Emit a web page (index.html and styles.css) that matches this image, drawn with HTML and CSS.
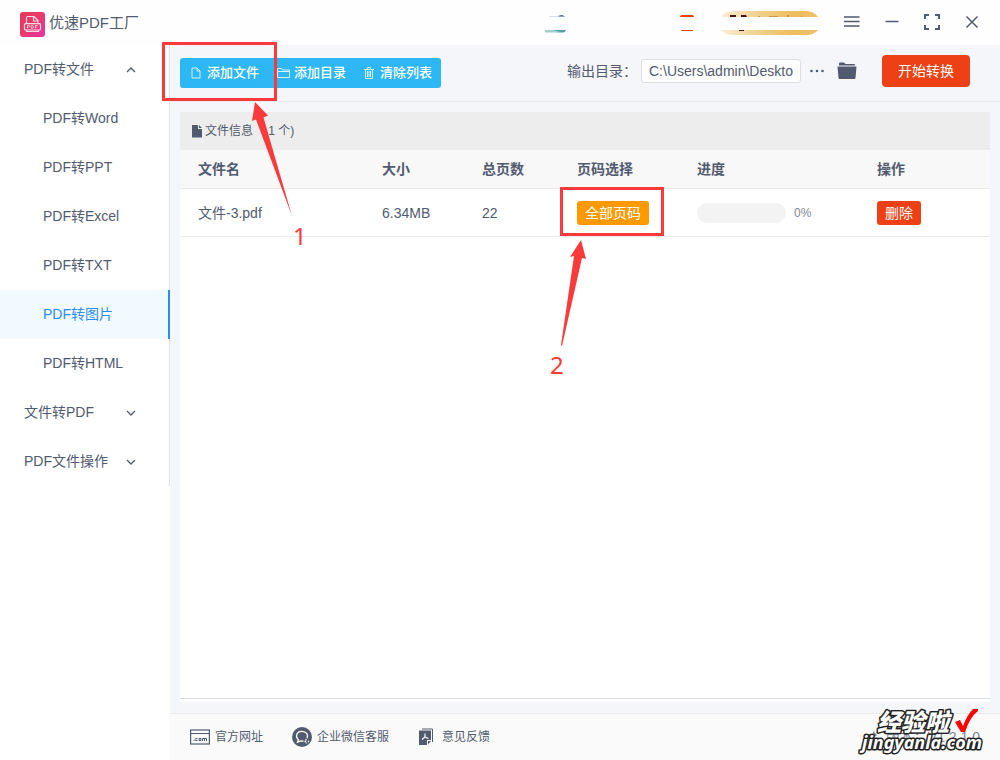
FILE: index.html
```html
<!DOCTYPE html>
<html lang="zh-CN">
<head>
<meta charset="utf-8">
<meta name="viewport" content="width=device-width, initial-scale=1">
<title>优速PDF工厂</title>
<link rel="stylesheet" href="styles.css">
</head>
<body>
<div class="app">
  <header class="titlebar">
    <svg class="logo" width="25" height="25" viewBox="0 0 25 25" aria-hidden="true">
      <defs><linearGradient id="lg" x1="0" y1="0" x2="1" y2="1"><stop offset="0" stop-color="#e8365c"/><stop offset=".5" stop-color="#e93a6b"/><stop offset="1" stop-color="#ec32a8"/></linearGradient></defs>
      <rect width="25" height="25" rx="3" fill="url(#lg)"/>
      <g fill="none" stroke="#fbdde6" stroke-width="1.2">
        <path d="M6.500 12V5.500q0-1 1-1h6.500l4 4V12M13.500 4.500V9H18"/>
        <rect x="4.500" y="11.600" width="16" height="6.400" rx="1"/>
        <path d="M6.500 18v1.500h12V18"/>
        <path d="M7.500 16.500v-3h1.200q1 0 1 .8t-1 .8H7.500M11.300 13.500v3h.8q1.300 0 1.300-1.500t-1.300-1.500zM15.300 16.500v-3h2.200M15.300 15h1.800" stroke-width=".8"/>
      </g>
    </svg>
    <h1 class="brand">优速PDF工厂</h1>
    <div class="badges" aria-hidden="true">
      <svg width="24" height="24" viewBox="0 0 24 24"><path d="M5 5h9l4-1 3 1.500H5z" fill="#b5bfc8"/><path d="M14 5l4-1 3 1.500h-6z" fill="#4f5f78"/><path d="M1 19h21q-1 2.500-3 2.500H14z" fill="#579da4"/><path d="M1 19h8l9 2.500H1z" fill="#a8d0d4"/></svg>
      <svg class="badge-red" width="16" height="24" viewBox="0 0 16 24"><path d="M1 6q0-2 2-2h10q2 0 2 2zM2 19h12v.5q0 .5-1 .5H3q-1 0-1-1z" fill="#ed4014"/></svg>
      <svg width="97" height="24" viewBox="0 0 97 24"><defs><linearGradient id="gold"><stop offset="0" stop-color="#fcedd6"/><stop offset=".45" stop-color="#f0cc83"/><stop offset=".75" stop-color="#edbd5c"/><stop offset="1" stop-color="#eec06d"/></linearGradient></defs><path d="M0 6Q4 0 12 0h73q8 0 12 6zM0 19h97q-4 5-12 5H12q-8 0-12-5z" fill="url(#gold)"/><path d="M9 4h6v2H9zM20 4h5l1 2h-6zM18 19h5v1h-5z" fill="#4b1414"/><path d="M37 5h2v1h-2zM48 5h9v1h-9zM66 4h2v2h-2zM80 5h1v1h-1z" fill="#c49a50"/></svg>
    </div>
    <div class="window-buttons">
      <button type="button" aria-label="菜单"><svg width="16" height="16" viewBox="0 0 16 16"><path d="M0 3h15.500M0 7.500h15.500M0 12h15.500" stroke="currentColor" stroke-width="1.500"/></svg></button>
      <button type="button" aria-label="最小化"><svg width="16" height="16" viewBox="0 0 16 16"><path d="M1.500 7.500h13" stroke="currentColor" stroke-width="1.500"/></svg></button>
      <button type="button" aria-label="最大化"><svg width="16" height="16" viewBox="0 0 16 16"><path d="M1 5V1h4M11 1h4v4M15 11v4h-4M5 15H1v-4" fill="none" stroke="currentColor" stroke-width="2"/></svg></button>
      <button type="button" aria-label="关闭"><svg width="16" height="16" viewBox="0 0 16 16"><path d="M2.500 2.500l11 11M13.500 2.500l-11 11" stroke="currentColor" stroke-width="1.500"/></svg></button>
    </div>
  </header>

  <div class="body">
    <aside class="sidebar">
      <nav class="menu">
        <button type="button" class="group">PDF转文件<svg width="10" height="10" viewBox="0 0 10 10"><path d="M1 7l4-4 4 4"/></svg></button>
        <a class="item" href="#word">PDF转Word</a>
        <a class="item" href="#ppt">PDF转PPT</a>
        <a class="item" href="#excel">PDF转Excel</a>
        <a class="item" href="#txt">PDF转TXT</a>
        <a class="item active" href="#image">PDF转图片</a>
        <a class="item" href="#html">PDF转HTML</a>
        <button type="button" class="group">文件转PDF<svg width="10" height="10" viewBox="0 0 10 10"><path d="M1 3l4 4 4-4"/></svg></button>
        <button type="button" class="group">PDF文件操作<svg width="10" height="10" viewBox="0 0 10 10"><path d="M1 3l4 4 4-4"/></svg></button>
      </nav>
    </aside>

    <main class="main">
      <div class="toolbar">
        <div class="actions">
          <button type="button"><svg width="10" height="12" viewBox="0 0 10 12"><path d="M1 1h5l3 3v7H1zM6 1v3h3"/></svg>添加文件</button>
          <button type="button"><svg width="13" height="12" viewBox="0 0 13 12"><path d="M.5 10.500v-9h4l1 1.500h7v7.500zM.5 4.500h12"/></svg>添加目录</button>
          <button type="button" class="clear"><svg width="10" height="12" viewBox="0 0 10 12"><path d="M0 2.500h10M3.500 2V.5h3V2M1.500 3v8.500h7V3M3.500 4v6M5 4v6M6.500 4v6"/></svg>清除列表</button>
        </div>
        <div class="output">
          <label for="dir">输出目录：</label>
          <input id="dir" type="text" value="C:\Users\admin\Deskto">
          <button type="button" class="plain" aria-label="更多"><svg width="16" height="16" viewBox="0 0 16 16" fill="currentColor"><circle cx="2.500" cy="8" r="1.300"/><circle cx="8" cy="8" r="1.300"/><circle cx="13.500" cy="8" r="1.300"/></svg></button>
          <button type="button" class="plain folder" aria-label="打开目录"><svg width="20" height="18" viewBox="0 0 20 18" fill="currentColor"><path d="M2 1.500Q2 .5 3 .5h4l1.500 1.500H17q1 0 1 1v.5H2z"/><path d="M.5 4.500h19L18.500 16q0 1-1 1h-15q-1 0-1-1z"/></svg></button>
          <button type="button" class="start">开始转换</button>
        </div>
      </div>

      <section class="panel">
        <h2 class="info"><svg width="12" height="14" viewBox="0 0 12 14"><path d="M1 1h6v4h4v8.500H1zM8 1l3 3H8z" fill="currentColor"/></svg>文件信息（ 1 个)</h2>
        <table class="files">
          <colgroup><col class="c-name"><col class="c-size"><col class="c-pages"><col class="c-range"><col class="c-progress"><col class="c-op"></colgroup>
          <thead><tr><th>文件名</th><th>大小</th><th>总页数</th><th>页码选择</th><th>进度</th><th>操作</th></tr></thead>
          <tbody><tr>
            <td>文件-3.pdf</td><td>6.34MB</td><td>22</td>
            <td><button type="button" class="tag orange">全部页码</button></td>
            <td><div class="progress"><span class="track" role="progressbar" aria-valuenow="0" aria-valuemin="0" aria-valuemax="100" aria-label="进度"></span><span class="pct">0%</span></div></td>
            <td><button type="button" class="tag red">删除</button></td>
          </tr></tbody>
        </table>
      </section>

      <footer class="footer">
        <a href="#site"><svg width="20" height="16" viewBox="0 0 20 16"><rect x=".6" y="1" width="18.800" height="14" fill="none" stroke="currentColor" stroke-width="1.200"/><path d="M1 4.500h18" stroke="currentColor"/><path d="M3.500 11.500h1M7.500 9.500H6q-.8 0-.8 1t.8 1h1.500M9 9.500h2v2H9zM12.500 12V9.500h4V12M14.500 9.500V12" fill="none" stroke="currentColor"/></svg>官方网址</a>
        <a href="#service"><svg width="20" height="20" viewBox="0 0 20 20"><circle cx="10" cy="10" r="10" fill="currentColor"/><path d="M11.500 14q-1.200.3-2.800 0L5.500 15.200l.8-2.500C3 9.500 4.500 4.300 9.800 4.300c5 0 6.700 3.700 5.200 7" fill="none" stroke="#fff" stroke-width="1.300"/><path d="M14 12v1.500M12.500 14.500h1.500M16 14l1 1M14.500 15.500v1" stroke="#fff" stroke-width="1.300"/></svg>企业微信客服</a>
        <a class="feedback" href="#feedback"><svg width="16" height="18" viewBox="0 0 16 18"><path d="M4 1h10.500v13" fill="none" stroke="currentColor"/><path d="M1 2.500h12V12H9v5H1zM10 13h3l-3 3.500z" fill="currentColor"/><path d="M7 5.500v3.500L4 11.500M7 9l3.500 1.500" fill="none" stroke="#fff" stroke-width="1.200"/></svg>意见反馈</a>
        <span class="version"><svg width="12" height="14" viewBox="0 0 12 14"><path d="M1 9q0-5 5-5h2V1l4 4-4 3V6H6Q3 6 1 9z" fill="currentColor"/></svg>版本：V1.2.1.0</span>
      </footer>
    </main>
  </div>

  <svg class="annotations" width="1000" height="760" viewBox="0 0 1000 760">
    <g fill="none" stroke="#fb3b3b" stroke-width="3"><rect x="163.500" y="43.500" width="112" height="56"/><rect x="561.500" y="188.500" width="101" height="46"/></g>
    <g fill="#fb3b3b">
      <path d="M255 102L268 115.500 263.500 117.500 292 216 256 119.500 252 121z"/>
      <path d="M581 240L586 259 582 258 562 346 561 345 574 256 570 257z"/>
      <text class="mark-number" x="293" y="245">1</text>
      <text class="mark-number" x="550" y="374">2</text>
    </g>
    <text class="watermark-cn" x="877" y="731">经验啦</text>
    <text class="watermark-url" x="862" y="749">jingyanla.com</text>
    <path d="M955 722l5-2 3 6q4-11 10-17h5v2q-8 6-13 21h-4z" fill="#f00"/>
  </svg>
</div>
</body>
</html>
```
FILE: styles.css
```css
* { box-sizing: border-box; }

body {
  margin: 0;
  color: #515a6e;
  background: #fff;
  font: 14px/20px "Liberation Sans", "Noto Sans CJK SC", sans-serif;
}

button {
  margin: 0;
  padding: 0;
  border: 0;
  background: none;
  color: inherit;
  font: inherit;
  cursor: pointer;
}

a { color: inherit; text-decoration: none; }
svg { flex: none; }

.app {
  position: relative;
  display: flex;
  flex-direction: column;
  min-height: 100vh;
  overflow: hidden;
}

/* Title bar */
.titlebar {
  display: flex;
  align-items: center;
  height: 45px;
  padding: 0 20px;
  background: #fefefe;
}
.logo { margin-top: 4px; }
.brand {
  flex: 1;
  margin: 0 0 0 4px;
  font-size: 15px;
  font-weight: 400;
  line-height: 24px;
}
.badges { display: flex; align-items: center; margin-right: 26px; }
.badge-red { margin: 0 26px 0 111px; }
.window-buttons { display: flex; gap: 24px; padding-bottom: 2px; }
.window-buttons button { display: flex; }

.body { display: flex; flex: 1; }

/* Sidebar */
.sidebar { flex: none; width: 170px; }
.menu { display: flex; flex-direction: column; border-right: 1px solid #dcdee2; }
.group, .item { display: flex; align-items: center; height: 49px; padding-bottom: 1px; }
.group { justify-content: space-between; padding: 0 33px 1px 24px; }
.group svg { margin-top: 2px; fill: none; stroke: currentColor; stroke-width: 1.3; }
.item { padding-left: 43px; }
.item.active {
  margin-right: -1px;
  border-right: 2px solid #2d8cf0;
  background: #f0faff;
  color: #2d8cf0;
}

/* Main area */
.main {
  display: flex;
  flex: 1;
  flex-direction: column;
  min-width: 0;
  background: #f5f6f9;
}
.toolbar {
  display: flex;
  align-items: center;
  justify-content: space-between;
  height: 57px;
  padding: 0 30px 0 10px;
  border-bottom: 1px solid #e8eaec;
}
.actions {
  display: flex;
  gap: 18px;
  height: 30px;
  padding: 0 9px 0 11px;
  border-radius: 3px;
  background: #2db7f5;
  color: #fff;
  font-size: 13px;
  font-weight: 500;
}
.actions button { display: flex; align-items: center; gap: 4px; }
.actions button:first-child { gap: 6px; }
.actions svg { fill: none; stroke: #d5f1fd; }
.actions .clear { gap: 6px; }
.output { display: flex; align-items: center; padding-bottom: 4px; }
.output input {
  width: 160px;
  height: 24px;
  margin: 0 8px 0 4px;
  padding: 0 7px;
  border: 1px solid #dcdee2;
  border-radius: 3px;
  background: #fff;
  color: inherit;
  font: inherit;
}
.plain { display: flex; }
.folder { margin: 0 25px 0 12px; }
.start {
  width: 88px;
  height: 32px;
  border-radius: 4px;
  background: #ed4014;
  color: #fff;
}

/* File list */
.panel {
  flex: 1;
  margin: 10px 10px 11px;
  border-bottom: 3px solid #fff;
  background: #fff;
  box-shadow: inset 0 -1px #dcdee2;
}
.info {
  display: flex;
  align-items: center;
  height: 38px;
  margin: 0;
  padding-left: 11px;
  background: #ededed;
  font-size: 12px;
  font-weight: 400;
  white-space: pre;
}
.info svg { margin-right: 2px; }
.files {
  width: 100%;
  border-collapse: separate;
  border-spacing: 0;
  table-layout: fixed;
}
.files th, .files td {
  padding: 0 0 0 18px;
  border-bottom: 1px solid #e8eaec;
  text-align: left;
}
.files th { height: 39px; background: #f8f8f9; }
.files td { height: 48px; }
.c-name { width: 184px; }
.c-size { width: 100px; }
.c-pages { width: 95px; }
.c-range { width: 120px; }
.c-progress { width: 180px; }
.tag {
  height: 24px;
  padding: 0 8px;
  border-radius: 3px;
  color: #fff;
}
.orange { background: #f90; }
.red { background: #ed4014; }
.progress { display: flex; align-items: center; gap: 8px; }
.track { width: 89px; height: 20px; border-radius: 10px; background: #f3f3f3; }
.pct { color: #808695; font-size: 12px; }

/* Footer */
.footer {
  display: flex;
  align-items: center;
  gap: 29px;
  height: 47px;
  padding: 0 20px;
  border-top: 1px solid #e8eaec;
  background: #fafafa;
  font-size: 12px;
}
.footer a, .version { display: flex; align-items: center; gap: 5px; }
.footer .feedback { gap: 8px; }
.version { gap: 9px; margin-left: auto; color: #808695; font-size: 14px; }

/* Callouts and watermark drawn over the window */
.annotations { position: absolute; top: 0; left: 0; pointer-events: none; }
.mark-number { font: 24px "Noto Sans", sans-serif; }
.watermark-cn, .watermark-url {
  fill: #fff;
  stroke: #222;
  stroke-width: 3px;
  stroke-linejoin: round;
  paint-order: stroke;
}
.watermark-cn { font: italic 900 24px "Noto Sans CJK SC", sans-serif; }
.watermark-url { font: italic 700 18px "Noto Sans", sans-serif; }
```
